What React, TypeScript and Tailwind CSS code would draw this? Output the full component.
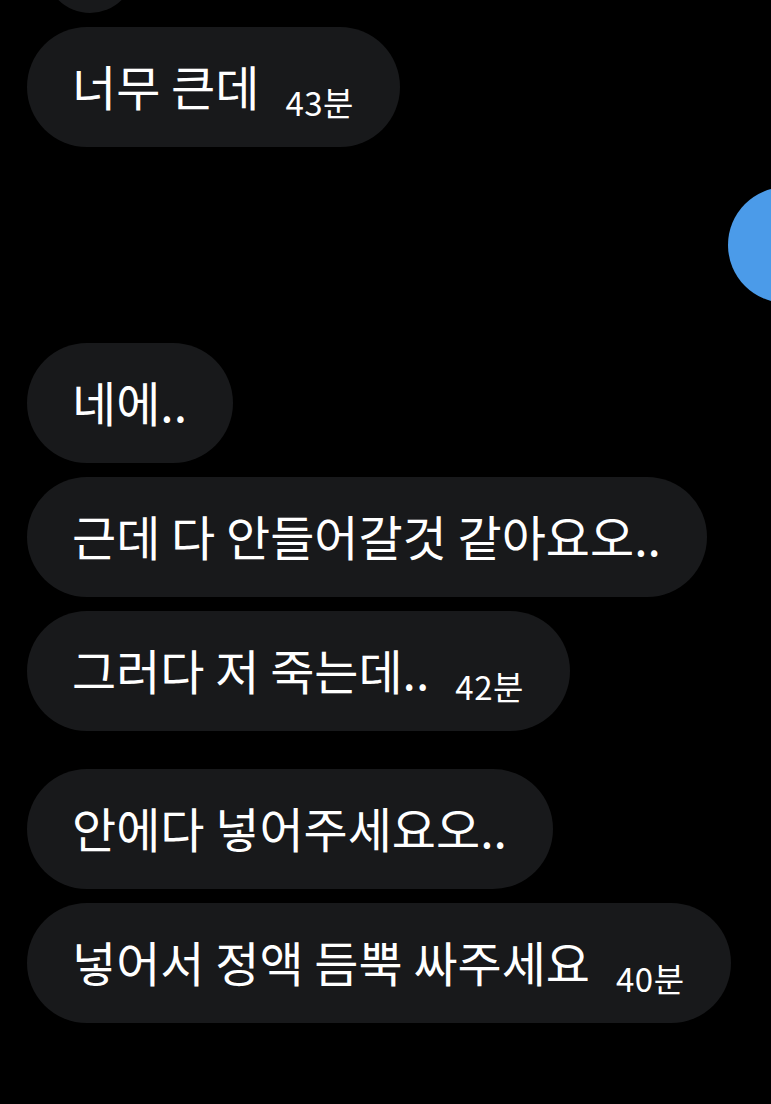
import React from 'react'

// One chat message from the other side
interface Message {
  text: string
  time?: string
}

const groups: Message[][] = [
  [{ text: '네에..' }, { text: '근데 다 안들어갈것 같아요오..' }, { text: '그러다 저 죽는데..', time: '42분' }],
  [{ text: '안에다 넣어주세요오..' }, { text: '넣어서 정액 듬뿍 싸주세요', time: '40분' }],
]

const Bubble: React.FC<{ msg: Message }> = ({ msg }) => (
  <div className="flex h-[120px] w-fit items-center rounded-full bg-[#18191b] pl-[45px] pr-[46px]">
    <span className="mb-[4px] text-[48px] leading-none text-white">{msg.text}</span>
    {msg.time && (
      <span className="ml-[26px] mt-[30px] text-[33px] leading-none tracking-[0.5px] text-white">
        {msg.time}
      </span>
    )}
  </div>
)

export default function App() {
  return (
    <div
      className="h-[1104px] w-full overflow-hidden bg-black"
      style={{ fontFamily: '"Noto Sans CJK KR", "Noto Sans", sans-serif' }}
    >
      <div className="flex flex-col pl-[27px]">
        {/* bottom edge of an earlier bubble */}
        <div className="ml-[18px] mt-[-77px] h-[90px] w-[90px] rounded-full bg-[#18191b]" />

        <div className="mt-[14px]">
          <Bubble msg={{ text: '너무 큰데', time: '43분' }} />
        </div>

        {/* own message, mostly off screen */}
        <div className="flex h-[196px] justify-end">
          <div className="mr-[-73px] mt-[40px] h-[116px] w-[116px] rounded-full bg-[#4b9be9]" />
        </div>

        <div className="flex flex-col gap-[38px]">
          {groups.map((group, gi) => (
            <div key={gi} className="flex flex-col gap-[14px]">
              {group.map((msg, i) => (
                <Bubble key={i} msg={msg} />
              ))}
            </div>
          ))}
        </div>
      </div>
    </div>
  )
}
